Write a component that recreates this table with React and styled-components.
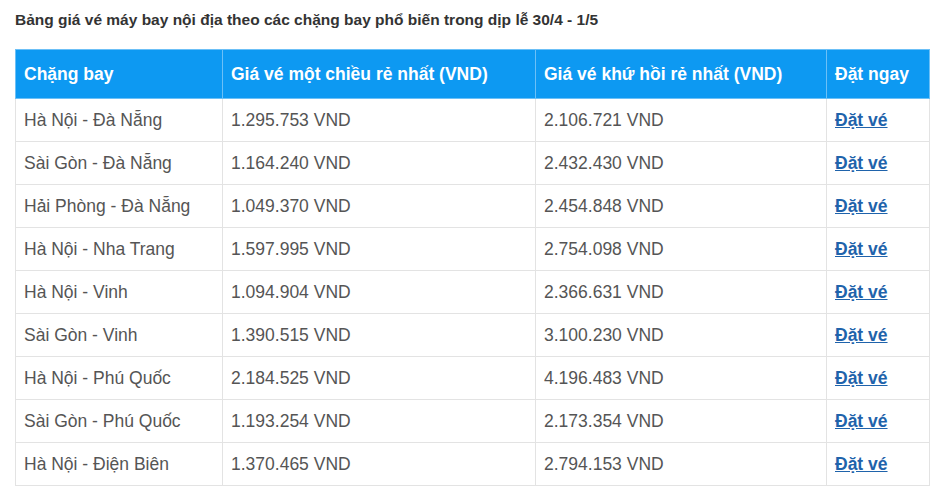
import React from "react";
import styled, { createGlobalStyle } from "styled-components";

const Global = createGlobalStyle`
  html, body { margin: 0; padding: 0; background: #fff; }
  body { font-family: "Liberation Sans", Arial, sans-serif; }
`;

const Page = styled.div`
  padding: 10px 11px 0 15px;
`;

const Title = styled.h3`
  margin: 0 0 19px 0;
  font-size: 15.5px;
  line-height: 20px;
  font-weight: bold;
  color: #333;
`;

const Table = styled.table`
  width: 914px;
  border-collapse: collapse;
  table-layout: fixed;
`;

const HeadCell = styled.th`
  background: #0d99f2;
  color: #fff;
  font-size: 17.5px;
  font-weight: bold;
  text-align: left;
  height: 49px;
  padding: 0 8px;
  border: 1px solid #6cc0f7;
  box-sizing: border-box;
`;

const Cell = styled.td`
  color: #555;
  font-size: 17.5px;
  height: 43px;
  padding: 0 8px;
  border: 1px solid #e3e3e3;
  box-sizing: border-box;
  white-space: nowrap;
`;

const Link = styled.a`
  color: #1f63ab;
  font-weight: bold;
  text-decoration: underline;
  cursor: pointer;
`;

const rows = [
  ["Hà Nội - Đà Nẵng", "1.295.753 VND", "2.106.721 VND"],
  ["Sài Gòn - Đà Nẵng", "1.164.240 VND", "2.432.430 VND"],
  ["Hải Phòng - Đà Nẵng", "1.049.370 VND", "2.454.848 VND"],
  ["Hà Nội - Nha Trang", "1.597.995 VND", "2.754.098 VND"],
  ["Hà Nội - Vinh", "1.094.904 VND", "2.366.631 VND"],
  ["Sài Gòn - Vinh", "1.390.515 VND", "3.100.230 VND"],
  ["Hà Nội - Phú Quốc", "2.184.525 VND", "4.196.483 VND"],
  ["Sài Gòn - Phú Quốc", "1.193.254 VND", "2.173.354 VND"],
  ["Hà Nội - Điện Biên", "1.370.465 VND", "2.794.153 VND"],
];

export default function App() {
  return (
    <Page>
      <Global />
      <Title>Bảng giá vé máy bay nội địa theo các chặng bay phổ biến trong dịp lễ 30/4 - 1/5</Title>
      <Table>
        <colgroup>
          <col style={{ width: 207 }} />
          <col style={{ width: 313 }} />
          <col style={{ width: 291 }} />
          <col style={{ width: 103 }} />
        </colgroup>
        <thead>
          <tr>
            <HeadCell>Chặng bay</HeadCell>
            <HeadCell>Giá vé một chiều rẻ nhất (VND)</HeadCell>
            <HeadCell>Giá vé khứ hồi rẻ nhất (VND)</HeadCell>
            <HeadCell>Đặt ngay</HeadCell>
          </tr>
        </thead>
        <tbody>
          {rows.map((r) => (
            <tr key={r[0]}>
              <Cell>{r[0]}</Cell>
              <Cell>{r[1]}</Cell>
              <Cell>{r[2]}</Cell>
              <Cell>
                <Link>Đặt vé</Link>
              </Cell>
            </tr>
          ))}
        </tbody>
      </Table>
    </Page>
  );
}
